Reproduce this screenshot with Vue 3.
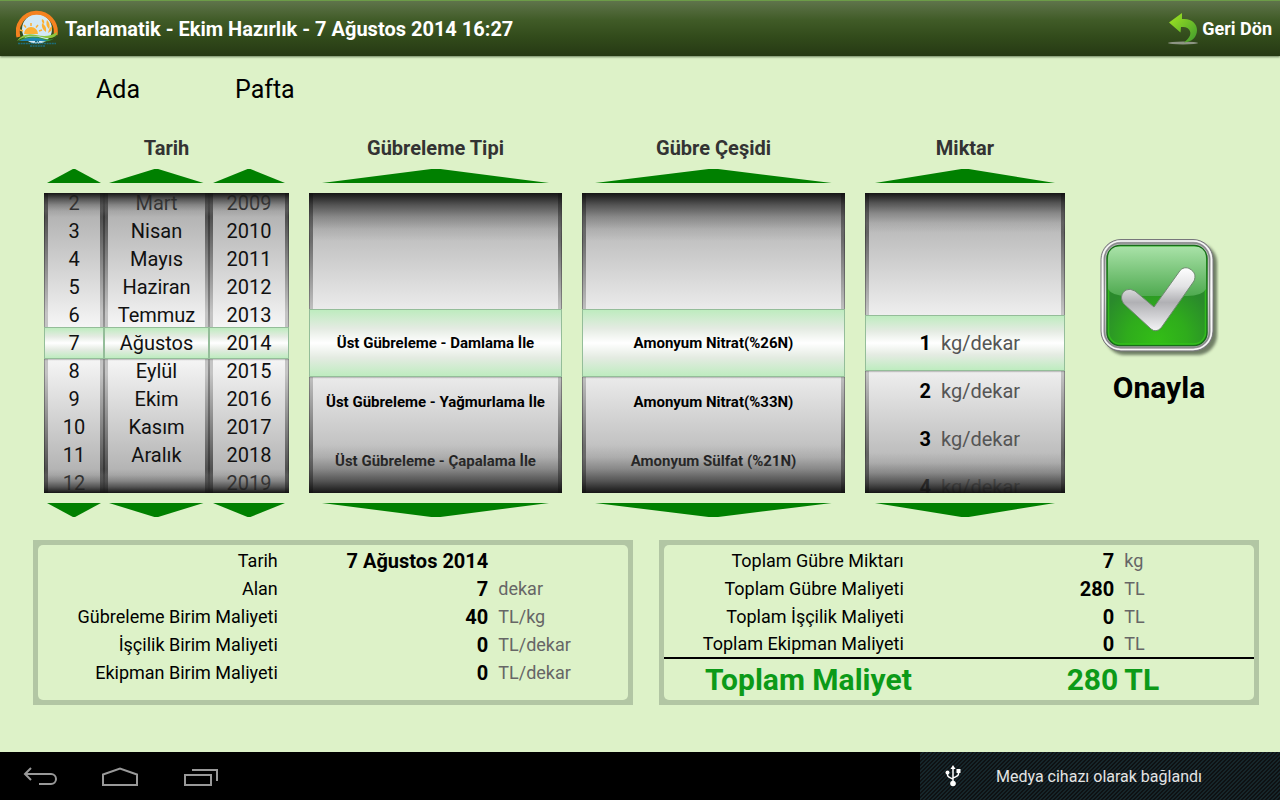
<script setup>
import { reactive } from 'vue'

const groups = reactive([
  {
    title: 'Tarih',
    kind: 'date',
    wheels: [
      { name: 'Gün', selected: 5, items: ['2', '3', '4', '5', '6', '7', '8', '9', '10', '11', '12'] },
      {
        name: 'Ay',
        selected: 5,
        items: ['Mart', 'Nisan', 'Mayıs', 'Haziran', 'Temmuz', 'Ağustos', 'Eylül', 'Ekim', 'Kasım', 'Aralık'],
      },
      {
        name: 'Yıl',
        selected: 5,
        items: ['2009', '2010', '2011', '2012', '2013', '2014', '2015', '2016', '2017', '2018', '2019'],
      },
    ],
    pitch: 28,
  },
  {
    title: 'Gübreleme Tipi',
    kind: 'text',
    wheels: [
      {
        name: 'Gübreleme Tipi',
        selected: 0,
        items: ['Üst Gübreleme - Damlama İle', 'Üst Gübreleme - Yağmurlama İle', 'Üst Gübreleme - Çapalama İle'],
      },
    ],
    pitch: 59,
  },
  {
    title: 'Gübre Çeşidi',
    kind: 'text',
    wheels: [
      {
        name: 'Gübre Çeşidi',
        selected: 0,
        items: ['Amonyum Nitrat(%26N)', 'Amonyum Nitrat(%33N)', 'Amonyum Sülfat (%21N)'],
      },
    ],
    pitch: 59,
  },
  {
    title: 'Miktar',
    kind: 'amount',
    wheels: [{ name: 'Miktar', selected: 0, items: ['1', '2', '3', '4'] }],
    pitch: 48,
  },
])

const unitRows = [
  { label: 'Tarih', value: '7 Ağustos 2014', unit: '' },
  { label: 'Alan', value: '7', unit: 'dekar' },
  { label: 'Gübreleme Birim Maliyeti', value: '40', unit: 'TL/kg' },
  { label: 'İşçilik Birim Maliyeti', value: '0', unit: 'TL/dekar' },
  { label: 'Ekipman Birim Maliyeti', value: '0', unit: 'TL/dekar' },
]

const totalRows = [
  { label: 'Toplam Gübre Miktarı', value: '7', unit: 'kg' },
  { label: 'Toplam Gübre Maliyeti', value: '280', unit: 'TL' },
  { label: 'Toplam İşçilik Maliyeti', value: '0', unit: 'TL' },
  { label: 'Toplam Ekipman Maliyeti', value: '0', unit: 'TL' },
]

function step(wheel, delta) {
  wheel.selected = Math.min(wheel.items.length - 1, Math.max(0, wheel.selected + delta))
}

function offset(wheel, pitch) {
  return { marginTop: -(wheel.selected + 0.5) * pitch + 'px' }
}
</script>

<template>
  <div class="screen">
    <header class="bar">
      <svg class="logo" viewBox="0 0 42 37" aria-hidden="true">
        <circle cx="21" cy="19" r="15" fill="#d3e9f5" />
        <path d="M2.500 27 A19 19 0 1 1 39.500 25" fill="none" stroke="#f58220" stroke-width="4" />
        <g fill="#fbb034">
          <path d="M8 24 a7 7 0 0 1 14 0z" />
          <path d="M30 22 q-5-3-4-9 q5 3 4 9z M33 19 q-4-4-2-9 q4 4 2 9z M28 14 q-3-2-2-5 q3 1 2 5z M32 23 q1-5 4-7 q1 5-4 7z" />
        </g>
        <path d="M15 16v-3 M10 17.500l-2-2.500 M20 17.500l2-2.500 M7 21l-3-1 M23 21l3-1" stroke="#fbb034" stroke-width="1.500" />
        <path d="M1 31 Q7 22 20 25 T41 22 Q41 29 30 28 Q13 23 1 31z" fill="#8cc63f" />
        <path d="M2 31 Q14 24 26 28 T41 25 Q36 33 25 31 Q14 28 2 31z" fill="#3a9a3a" />
        <path d="M3 31 Q17 24 32 31 Q18 31 3 31z" fill="#2088b5" />
        <path d="M19 31.500h4 M2 33.500h38" stroke="#1d6d7c" stroke-width="1.500" stroke-dasharray="2 .6" />
        <path d="M14 36h15" stroke="#1d6d7c" stroke-width="1.500" stroke-dasharray="2 .6" />
      </svg>
      <h1>Tarlamatik - Ekim Hazırlık - 7 Ağustos 2014 16:27</h1>
      <button class="back" type="button">
        <svg viewBox="0 0 30 32" aria-hidden="true">
          <defs>
            <linearGradient id="arrowFill" x1="0" y1="0" x2="1" y2="1">
              <stop offset="0" stop-color="#a4e820" />
              <stop offset="1" stop-color="#3f9a2e" />
            </linearGradient>
          </defs>
          <ellipse cx="15" cy="30" rx="15" ry="1.500" fill="#8d9584" />
          <path d="M1 9.500 L14 0 V6 C24 5 29 11 29 17 C29 24 24 29 16 29.500 C22 25 24 20 21 16.500 C19 14 16 14 13 14 L12.500 19.500 Z" fill="url(#arrowFill)" />
        </svg>
        <span>Geri Dön</span>
      </button>
    </header>

    <main>
      <div class="plot">
        <span>Ada</span>
        <span>Pafta</span>
      </div>

      <div class="pickers">
        <section v-for="group in groups" :key="group.title" :class="['group', group.kind]">
          <h2>{{ group.title }}</h2>
          <div class="wheels">
            <div v-for="wheel in group.wheels" :key="wheel.name" class="picker">
              <button class="arrow" type="button" :aria-label="wheel.name + ' önceki'" @click="step(wheel, -1)">
                <svg viewBox="0 0 100 14" preserveAspectRatio="none"><polygon points="0,14 48,0 52,0 100,14" /></svg>
              </button>
              <div class="wheel">
                <div class="band"></div>
                <ul :style="offset(wheel, group.pitch)">
                  <li v-for="item in wheel.items" :key="item">
                    <template v-if="group.kind === 'amount'">
                      <b>{{ item }}</b><span>kg/dekar</span>
                    </template>
                    <template v-else>{{ item }}</template>
                  </li>
                </ul>
              </div>
              <button class="arrow" type="button" :aria-label="wheel.name + ' sonraki'" @click="step(wheel, 1)">
                <svg viewBox="0 0 100 14" preserveAspectRatio="none"><polygon points="0,0 100,0 52,14 48,14" /></svg>
              </button>
            </div>
          </div>
        </section>

        <button class="confirm" type="button">
          <svg viewBox="0 0 120 120" aria-hidden="true">
            <defs>
              <linearGradient id="frame" x1="0" y1="0" x2="0" y2="1">
                <stop offset="0" stop-color="#b4b4b4" />
                <stop offset=".5" stop-color="#f2f2f2" />
                <stop offset="1" stop-color="#a8a8a8" />
              </linearGradient>
              <radialGradient id="face" cx=".5" cy=".95" r=".75">
                <stop offset="0" stop-color="#33be16" />
                <stop offset=".4" stop-color="#2fac1c" />
                <stop offset=".8" stop-color="#2a8a2c" />
              </radialGradient>
              <linearGradient id="gloss" x1="0" y1="0" x2="0" y2="1">
                <stop offset="0" stop-color="#a9e2a8" />
                <stop offset="1" stop-color="#4faa50" />
              </linearGradient>
              <linearGradient id="tick" x1="0" y1="0" x2="0" y2="1">
                <stop offset="0" stop-color="#ffffff" />
                <stop offset=".3" stop-color="#e2e2e4" />
                <stop offset=".55" stop-color="#b0b0b4" />
                <stop offset="1" stop-color="#f4f4f6" />
              </linearGradient>
              <filter id="soft" x="-20%" y="-20%" width="140%" height="140%">
                <feGaussianBlur stdDeviation="1.500" />
              </filter>
            </defs>
            <rect x="6" y="5" width="112" height="112" rx="20" fill="#4c5945" opacity=".75" filter="url(#soft)" />
            <rect x="2" y="1.500" width="112" height="111.500" rx="20" fill="url(#frame)" stroke="#77777b" />
            <rect x="3.500" y="3" width="109" height="108.500" rx="18.500" fill="none" stroke="#f8f8f8" stroke-width="1.500" />
            <rect x="5.500" y="5" width="105" height="104.500" rx="16" fill="none" stroke="#8a8a8d" stroke-width="1.500" />
            <rect x="8" y="7.500" width="100" height="100" rx="13" fill="url(#face)" stroke="#176c19" stroke-width="1.500" />
            <rect x="9.500" y="9" width="97" height="97" rx="12" fill="none" stroke="#35c61b" stroke-width="1.500" opacity=".8" />
            <path d="M9 51 V21 Q9 8.500 21 8.500 H95 Q107 8.500 107 21 V51 Q103 58 88 58 H28 Q13 58 9 51z" fill="url(#gloss)" />
            <path d="M36 53 L55 69 L80 34 C83 29 88 29 91 31 C96 34 97 38 95 43 L62 90 Q57 95 52 91 L25 66 C21 61 22 55 27 52 Q31 50 36 53z" fill="url(#tick)" stroke="#6f8a70" stroke-width="1" />
          </svg>
          <span>Onayla</span>
        </button>
      </div>

      <div class="summary">
        <div class="panel">
          <table>
            <colgroup><col class="c-label" /><col class="c-value" /><col /></colgroup>
            <tbody>
              <tr v-for="row in unitRows" :key="row.label">
                <th scope="row">{{ row.label }}</th>
                <td class="value">{{ row.value }}</td>
                <td class="unit">{{ row.unit }}</td>
              </tr>
            </tbody>
          </table>
        </div>
        <div class="panel totals">
          <table>
            <colgroup><col class="c-label" /><col class="c-value" /><col /></colgroup>
            <tbody>
              <tr v-for="row in totalRows" :key="row.label">
                <th scope="row">{{ row.label }}</th>
                <td class="value">{{ row.value }}</td>
                <td class="unit">{{ row.unit }}</td>
              </tr>
            </tbody>
            <tfoot>
              <tr>
                <th scope="row">Toplam Maliyet</th>
                <td class="value">280</td>
                <td class="unit">TL</td>
              </tr>
            </tfoot>
          </table>
        </div>
      </div>
    </main>

    <footer class="system">
      <nav>
        <button type="button" aria-label="Geri">
          <svg viewBox="0 0 40 24"><path d="M11 4 L5 10 L11 16 M5 10 H31 A5 5 0 0 1 31 20 H19" /></svg>
        </button>
        <button type="button" aria-label="Ana ekran">
          <svg viewBox="0 0 40 24"><path d="M3 21 V10.500 L20 4.500 L37 10.500 V21 Z" /></svg>
        </button>
        <button type="button" aria-label="Son uygulamalar">
          <svg viewBox="0 0 40 24"><path d="M5 11 H31 V21 H5 Z M12 6 H37 V17" /></svg>
        </button>
      </nav>
      <div class="notice">
        <svg viewBox="0 0 16 22" aria-hidden="true">
          <path d="M8 3 V18 M2.500 7 V10 Q2.500 12 8 14 M13.500 6 V9 Q13.500 11 8 13" fill="none" stroke="#fff" stroke-width="1.500" />
          <path d="M8 0 L10.500 4 H5.500z M11.500 4h4v4h-4z" fill="#fff" />
          <circle cx="2.500" cy="7.500" r="2" fill="#fff" />
          <circle cx="8" cy="18.500" r="2.800" fill="#fff" />
        </svg>
        <span>Medya cihazı olarak bağlandı</span>
      </div>
    </footer>
  </div>
</template>

<style>
body {
  background: #ddf2c8;
}
</style>

<style scoped>
.screen {
  display: flex;
  flex-direction: column;
  min-height: 100vh;
  background: #ddf2c8;
  color: #000;
  font-family: Roboto, "Noto Sans", sans-serif;
}

button {
  padding: 0;
  border: 0;
  background: none;
  color: inherit;
  font: inherit;
  cursor: pointer;
}

svg {
  display: block;
}

h1,
h2,
ul {
  margin: 0;
  padding: 0;
}

.bar {
  display: flex;
  align-items: center;
  box-sizing: border-box;
  height: 56px;
  padding: 0 8px 0 16px;
  border-top: 1px solid #6c9c48;
  background: linear-gradient(#5f744b, #405b27 35%, #324b1b 65%, #263914);
  box-shadow: 0 1px 2px rgba(60, 80, 50, 0.7);
  color: #fff;
}

.logo {
  width: 42px;
  height: 37px;
  margin-right: 7px;
}

h1 {
  flex: 1;
  font-size: 20px;
  font-weight: 700;
  line-height: 28px;
}

.back {
  display: flex;
  align-items: center;
  gap: 4px;
  font-size: 18px;
  font-weight: 700;
  line-height: 24px;
}

.back svg {
  width: 30px;
  height: 32px;
}

main {
  flex: 1;
  padding-top: 18px;
}

.plot {
  display: flex;
  gap: 95px;
  padding-left: 96px;
  font-size: 25px;
  line-height: 32px;
}

.pickers {
  display: grid;
  grid-template-columns: 245fr 253fr 263fr 200fr 148fr;
  gap: 20px;
  margin-top: 28px;
  padding: 0 47px 0 44px;
}

h2 {
  color: #333;
  font-size: 20px;
  font-weight: 700;
  line-height: 28px;
  text-align: center;
}

.wheels {
  display: grid;
  margin-top: 7px;
}

.date .wheels {
  grid-template-columns: 60fr 105fr 80fr;
}

.picker {
  display: flex;
  flex-direction: column;
  gap: 10px;
}

.arrow svg {
  width: 90%;
  height: 14px;
  margin: 0 auto;
  fill: #008000;
}

.wheel {
  position: relative;
  height: 300px;
  overflow: hidden;
  background: linear-gradient(#a6a6a6, #fff 50%, #a6a6a6);
}

.wheel::before {
  content: "";
  position: absolute;
  inset: 0;
  background:
    linear-gradient(#222, #888 40%, #aaa 50%, #888 60%, #222) left / 1px 100% no-repeat,
    linear-gradient(#222, #888 40%, #aaa 50%, #888 60%, #222) right / 1px 100% no-repeat,
    linear-gradient(#333, #c4c4c4 40%, #c4c4c4 60%, #333) left / 4px 100% no-repeat,
    linear-gradient(#333, #c4c4c4 40%, #c4c4c4 60%, #333) right / 4px 100% no-repeat;
}

.wheel::after {
  --stops: rgba(17, 17, 17, 0.97), rgba(55, 55, 55, 0.75) 25%, rgba(93, 93, 93, 0.5) 50%, rgba(132, 132, 132, 0.25) 75%, rgba(170, 170, 170, 0);
  content: "";
  position: absolute;
  inset: 0;
  background:
    linear-gradient(to bottom, var(--stops)) top / 100% var(--shade) no-repeat,
    linear-gradient(to top, var(--stops)) bottom / 100% var(--shade) no-repeat;
  pointer-events: none;
}

.band {
  position: absolute;
  top: calc(50% - var(--band) / 2);
  left: 0;
  right: 0;
  box-sizing: border-box;
  height: var(--band);
  border: 1px solid #94bd99;
  background: linear-gradient(#beecbf, #e4ebe2 28%, #fff 50%, #e4ebe2 72%, #beecbf);
  box-shadow: 0 1px 1px rgba(90, 90, 90, 0.3);
}

.wheel ul {
  position: absolute;
  top: 50%;
  left: 0;
  right: 0;
  list-style: none;
  text-align: center;
}

.date {
  --band: 32px;
  --shade: 24px;
}

.date li {
  color: #111;
  font-size: 20px;
  line-height: 28px;
}

.text {
  --band: 68px;
  --shade: 48px;
}

.text li {
  font-size: 15px;
  font-weight: 700;
  line-height: 59px;
  white-space: nowrap;
}

.amount {
  --band: 56px;
  --shade: 40px;
}

.amount li {
  display: grid;
  grid-template-columns: 33fr 62fr;
  gap: 10px;
  font-size: 20px;
  line-height: 48px;
}

.amount b {
  text-align: right;
}

.amount span {
  color: #555;
  text-align: left;
}

.confirm {
  align-self: center;
  display: flex;
  flex-direction: column;
  align-items: center;
  gap: 12px;
  padding-bottom: 7px;
  font-size: 30px;
  font-weight: 700;
  line-height: 36px;
}

.confirm svg {
  width: 120px;
  height: 120px;
}

.summary {
  display: grid;
  grid-template-columns: 1fr 1fr;
  gap: 26px;
  margin-top: 23px;
  padding: 0 21px 0 33px;
}

.panel {
  padding: 5px;
  background: #b2c6a4;
}

.panel table {
  width: 100%;
  height: 155px;
  padding: 2px 0 13px;
  table-layout: fixed;
  border-collapse: separate;
  border-spacing: 0;
  border-radius: 5px;
  background: #ddf2c8;
}

.totals table {
  padding-bottom: 0;
}

.c-label {
  width: 42%;
}

.c-value {
  width: 35%;
}

th,
td {
  height: 28px;
  padding: 0;
  font-size: 18px;
  font-weight: 400;
  line-height: 28px;
  white-space: nowrap;
}

.totals tbody tr:last-child > * {
  height: 26px;
  line-height: 26px;
}

th {
  padding-right: 8px;
  text-align: right;
}

.value {
  padding-right: 4px;
  font-size: 20px;
  font-weight: 700;
  text-align: right;
}

.unit {
  padding-left: 6px;
  color: #666;
}

tfoot th,
tfoot .value,
tfoot .unit {
  height: 41px;
  padding-right: 0;
  border-top: 2px solid #000;
  color: #0c9a18;
  font-size: 30px;
  font-weight: 700;
  line-height: 38px;
}

.system {
  display: flex;
  height: 48px;
  background: #000;
}

nav {
  display: flex;
  flex: 1;
  align-items: center;
  gap: 40px;
  padding-left: 20px;
}

nav svg {
  width: 40px;
  height: 24px;
  fill: none;
  stroke: #999;
  stroke-width: 2;
}

.notice {
  display: flex;
  align-items: center;
  gap: 35px;
  box-sizing: border-box;
  width: 360px;
  padding-left: 25px;
  background: linear-gradient(135deg, #0e1113 37%, #16262b 37% 50%, #0e1113 50% 87%, #16262b 87%) 0 0 / 4px 4px;
  color: #e4e4e4;
  font-size: 16px;
}

.notice svg {
  width: 16px;
  height: 22px;
}
</style>
